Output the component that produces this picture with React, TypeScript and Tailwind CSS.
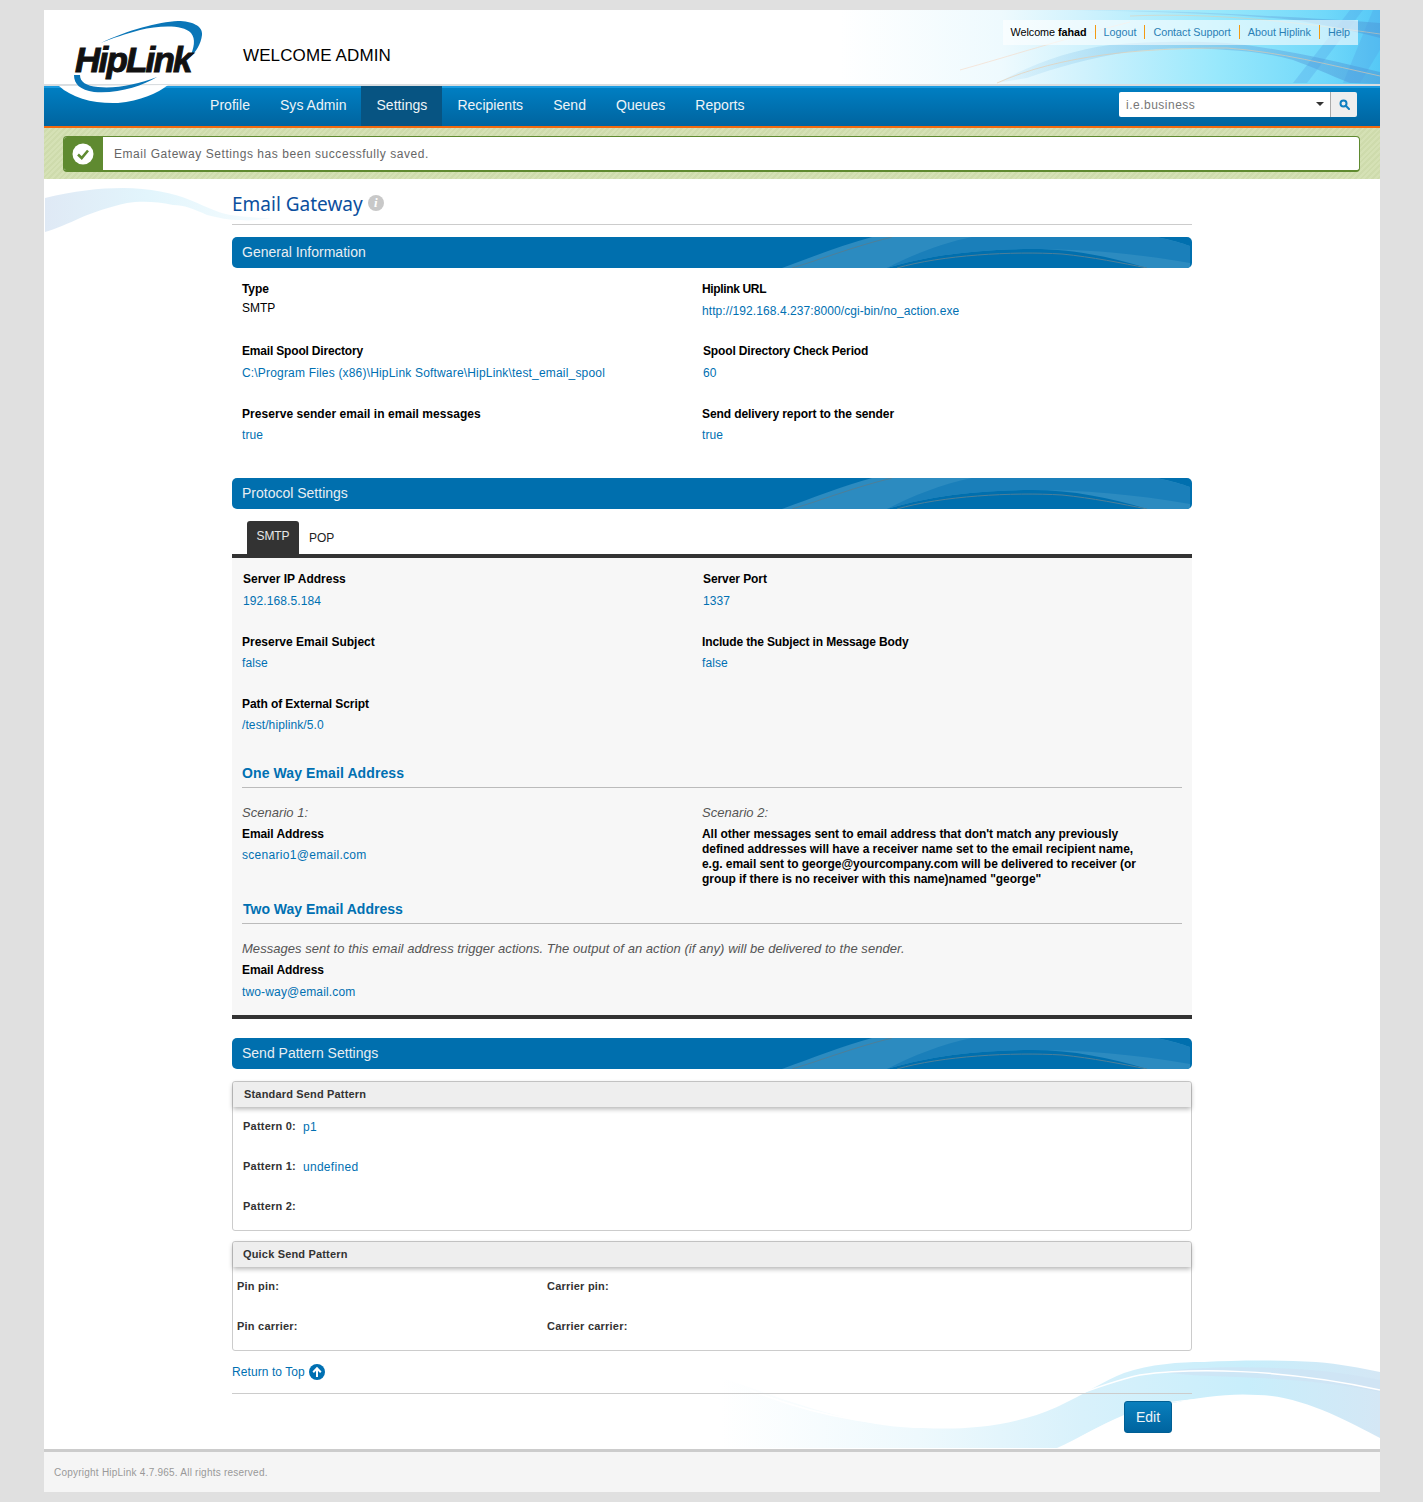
const navItems = ["Profile", "Sys Admin", "Settings", "Recipients", "Send", "Queues", "Reports"];
const topLinks = ["Logout", "Contact Support", "About Hiplink", "Help"];

function Logo() {
  return (
    <div className="absolute left-[14px] top-[8px] z-10 h-[100px] w-[150px]">
      <svg className="absolute left-0 top-0" width="150" height="100" viewBox="0 0 150 100">
        <path d="M1 68 C14 80 36 86 60 85 C82 83 100 75 110 67 Z" fill="#ffffff" />
        <path d="M43 25 C70 12 100 4 120 3 C134 3 145 8 144 17 C143 26 138 34 132 39 C136 30 138 21 133 15 C124 6 100 8 82 12 C68 16 54 20 43 25 Z" fill="#0a76b8" />
        <path d="M16 57 C16 66 22 72 36 74 C60 76 84 68 99 59 C80 66 58 71 40 69 C28 68 22 64 22 57 Z" fill="#0a76b8" />
      </svg>
      <span className="absolute left-[17px] top-[20px] text-[35px] font-bold italic leading-[44px] tracking-[-1.8px] text-[#111] [-webkit-text-stroke:1px_#111]">
        HipLink
      </span>
    </div>
  );
}

function HeaderWave() {
  return (
    <svg className="absolute right-0 top-0" width="540" height="74" viewBox="0 0 540 74">
      <defs>
        <linearGradient id="headerBase" x1="0" y1="0" x2="1" y2="0">
          <stop offset="0" stopColor="#ffffff" />
          <stop offset="0.3" stopColor="#eefafe" />
          <stop offset="0.45" stopColor="#d0f2fd" />
          <stop offset="0.7" stopColor="#98e8fc" />
          <stop offset="0.9" stopColor="#70d8fa" />
          <stop offset="1" stopColor="#55c8f6" />
        </linearGradient>
        <linearGradient id="bandFade" x1="0" y1="0" x2="1" y2="0">
          <stop offset="0" stopColor="#9fd4f0" stopOpacity="0.15" />
          <stop offset="0.35" stopColor="#8cc8ec" stopOpacity="0.5" />
          <stop offset="1" stopColor="#4ea6e0" stopOpacity="0.75" />
        </linearGradient>
      </defs>
      <rect width="540" height="74" fill="url(#headerBase)" />
      <path d="M157 73 C190 55 230 40 270 35 C310 31 350 31 387 33 C440 38 490 50 540 62 L540 74 L510 73 C490 65 470 56 453 50 C430 44 410 41 387 40 C350 37 320 38 287 42 C250 48 215 58 187 68 Z" fill="url(#bandFade)" />
      <path d="M230 0 C280 0 330 1 370 3 C430 6 490 9 540 13 L540 28 C510 20 480 14 453 10 C400 4 320 2 230 0 Z" fill="url(#bandFade)" />
      <path d="M510 0 L523 0 L467 73 L453 73 Z" fill="#4f9fe6" opacity="0.3" />
      <path d="M533 0 L540 0 L540 40 L520 73 L503 73 Z" fill="#4f9fe6" opacity="0.3" />
      <path d="M120 60 C170 46 220 30 290 12" stroke="#f7d9c4" strokeWidth="1" fill="none" opacity="0.6" />
      <path d="M157 73 C220 45 300 38 387 38 C440 42 490 55 540 66" stroke="#e9c9a8" strokeWidth="1" fill="none" opacity="0.6" />
      <path d="M290 6 C380 2 470 14 540 24" stroke="#e9c9a8" strokeWidth="1" fill="none" opacity="0.5" />
    </svg>
  );
}

function TopLeftWave() {
  return (
    <svg className="absolute left-0 top-0" width="240" height="60" viewBox="0 0 240 60">
      <defs>
        <linearGradient id="tlWave" x1="0" y1="0" x2="1" y2="0">
          <stop offset="0" stopColor="#dfe9f5" />
          <stop offset="0.45" stopColor="#e2f5fc" />
          <stop offset="1" stopColor="#f6fcfe" />
        </linearGradient>
      </defs>
      <path d="M1 19 C30 12 55 9 79 9 C105 9 130 14 146 21 C165 29 175 34 186 36 C200 38 215 39 229 39 C215 41 205 42 196 41 C185 41 175 39 163 36 C150 30 140 26 129 26 C112 22 95 22 83 24 C65 28 50 33 36 39 C25 44 12 50 1 53 Z" fill="url(#tlWave)" />
    </svg>
  );
}

function BottomWave() {
  return (
    <svg className="absolute bottom-[1px] right-0" width="660" height="88" viewBox="0 0 660 88">
      <defs>
        <linearGradient id="brWave" x1="0" y1="0" x2="1" y2="0">
          <stop offset="0" stopColor="#ffffff" />
          <stop offset="0.3" stopColor="#eef9fd" />
          <stop offset="0.55" stopColor="#d8f1fb" />
          <stop offset="0.8" stopColor="#c8eefb" />
          <stop offset="1" stopColor="#d4e7f5" />
        </linearGradient>
      </defs>
      <path d="M0 17 C70 42 140 68 203 68 C240 70 290 68 337 47 C365 34 385 20 404 13 C430 4 460 2 484 2 C520 0 560 0 596 2 C620 4 640 8 660 12 L660 78 C630 62 580 35 538 35 C510 33 480 37 453 43 C430 50 410 57 404 55 C380 65 355 80 337 88 L0 88 Z" fill="url(#brWave)" />
      <path d="M440 12 C480 6 540 6 590 10 C615 12 640 16 660 20 L660 32 C620 24 580 20 540 18 C500 16 470 16 440 12 Z" fill="#cfe3f4" opacity="0.7" />
      <path d="M30 30 C100 58 170 70 250 66 C310 60 360 28 420 15 C470 8 560 8 660 30" stroke="#ffffff" strokeWidth="1.5" fill="none" />
      <path d="M345 86 C380 66 420 44 470 40 C510 36 550 38 590 54 C620 64 640 72 660 80" stroke="#ffffff" strokeWidth="1" fill="none" />
    </svg>
  );
}

function SectionBar({ title }: { title: string }) {
  return (
    <div className="relative h-[31px] overflow-hidden rounded-[5px] bg-[#006fae]">
      <svg className="absolute left-0 top-0" width="960" height="31" viewBox="0 0 960 31">
        <path d="M550 31 C580 20 610 8 640 0 L925 0 C940 3 950 6 958 9 L958 31 L915 31 C880 20 840 12 800 12 C740 12 690 20 655 31 Z" fill="#2c8bc0" />
        <path d="M655 31 C680 18 710 6 740 0 L925 0 C938 3 950 6 958 9 L958 26 C900 16 850 12 800 12 C740 12 690 20 655 31 Z" fill="#1a7fba" />
        <path d="M560 31 C590 22 620 10 660 0" stroke="#4e7f98" strokeWidth="1" fill="none" />
        <path d="M665 31 C710 18 780 14 830 17 C860 20 890 26 915 31" stroke="#4e7f98" strokeWidth="1" fill="none" />
      </svg>
      <span className="absolute left-[10px] top-0 text-[14px] leading-[30px] text-[#e8eef3]">{title}</span>
    </div>
  );
}

function Field({
  label,
  value,
  offset = "",
  gap = "mt-[7px]",
  track = "tracking-[0.1px]",
  labelTrack = "tracking-[-0.08px]",
}: {
  label: string;
  value?: string;
  offset?: string;
  gap?: string;
  track?: string;
  labelTrack?: string;
}) {
  return (
    <div className={offset}>
      <div className={`${labelTrack} text-[12px] font-bold leading-[14px] text-black`}>{label}</div>
      {value && <div className={`${gap} ${track} text-[12px] leading-[15px] text-[#0070b2]`}>{value}</div>}
    </div>
  );
}

function PatternLabel({ children }: { children: string }) {
  return <span className="text-[11px] font-bold tracking-[0.22px] text-[#333]">{children}</span>;
}

function BoxHeader({ title, pad }: { title: string; pad: string }) {
  return (
    <div className={`h-[25px] rounded-t-[3px] bg-[#eeeeee] ${pad} text-[11px] font-bold leading-[24px] tracking-[0.17px] text-[#333] shadow-[0_2px_5px_rgba(0,0,0,0.3)]`}>
      {title}
    </div>
  );
}

export default function App() {
  return (
    <div className="min-h-[1502px] bg-[#e0e0e0] pb-[10px] pt-[10px] font-['Liberation_Sans',Arial,sans-serif]">
      <div className="relative ml-[44px] w-[1336px] bg-white">
        <Logo />
        <header className="relative h-[76px] border-b-2 border-[#d9dde0] bg-white">
          <HeaderWave />
          <h1 className="absolute left-[199px] top-[35px] text-[17px] leading-[22px] tracking-[0.12px] text-black">WELCOME ADMIN</h1>
          <div className="absolute right-[22px] top-[10px] flex h-[25px] w-[355px] items-center justify-end bg-white/60 pr-[8px] text-[10.8px] tracking-[-0.04px]">
            <span className="text-black">
              Welcome <b>fahad</b>
            </span>
            {topLinks.map((link) => (
              <span key={link} className="mb-[1px] ml-[8px] border-l border-[#f39a12] pl-[8px] leading-[14px] text-[#2a7fb5]">
                {link}
              </span>
            ))}
          </div>
        </header>

        <nav className="relative h-[42px] border-b-2 border-[#f26a0f] bg-gradient-to-b from-[#0080c4] to-[#00649f] shadow-[inset_0_2px_0_#1b9be0]">
          <div className="ml-[151px] flex h-[40px]">
            {navItems.map((item) => (
              <span
                key={item}
                className={`px-[15px] text-[14px] leading-[38px] tracking-[0.04px] text-[#eef4f8] ${item === "Settings" ? "bg-[#075482]" : ""}`}
              >
                {item}
              </span>
            ))}
          </div>
          <div className="absolute right-[23px] top-[6px] flex h-[25px] w-[238px] overflow-hidden rounded-[2px]">
            <div className="flex flex-1 items-center justify-between bg-white pl-[7px] pr-[6px] text-[12px] tracking-[0.5px] text-[#777]">
              <span>i.e.business</span>
              <span className="mb-[2px] h-0 w-0 border-x-[4.5px] border-t-[4.5px] border-x-transparent border-t-[#333]" />
            </div>
            <div className="flex w-[27px] items-center justify-center border-l border-[#aaa] bg-[#eeeeee]">
              <svg width="11" height="11" viewBox="0 0 11 11" fill="none" stroke="#0f7fc0" strokeWidth="2">
                <circle cx="4.5" cy="4.5" r="3" />
                <path d="M6.8 6.8 L10 10" strokeLinecap="round" />
              </svg>
            </div>
          </div>
        </nav>

        <div className="flex h-[51px] items-start bg-[repeating-linear-gradient(135deg,#d5e1b5_0,#d5e1b5_2px,#cedbac_2px,#cedbac_4px)] pl-[19px] pt-[8px]">
          <div className="flex h-[36px] w-[1297px] overflow-hidden rounded-[4px] border border-b-2 border-[#5f8a30] bg-white">
            <div className="flex w-[39px] items-center justify-center bg-[#5f8a30] pr-[2px]">
              <svg width="22" height="22" viewBox="0 0 22 22">
                <circle cx="11" cy="11" r="10.5" fill="#fff" />
                <path d="M6 11.5 L9.7 15 L16 7.5" fill="none" stroke="#5f8a30" strokeWidth="2.6" />
              </svg>
            </div>
            <span className="pl-[11px] text-[12px] leading-[35px] tracking-[0.55px] text-[#666]">
              Email Gateway Settings has been successfully saved.
            </span>
          </div>
        </div>

        <main className="relative h-[1270px]">
          <TopLeftWave />
          <BottomWave />
          <div className="relative ml-[188px] w-[960px]">
            <div className="flex h-[46px] items-center gap-[5px] border-b border-[#ccc] pb-[1px] pt-[6px]">
              <h2 className="font-['Noto_Sans',sans-serif] text-[19px] leading-[36px] text-[#0b4f9e]">Email Gateway</h2>
              <span className="mb-[3px] flex h-[16px] w-[16px] items-center justify-center rounded-full bg-[#c8c8c8] font-['Liberation_Serif',serif] text-[13px] font-bold italic text-white">
                i
              </span>
            </div>

            <div className="mt-[12px]">
              <SectionBar title="General Information" />
            </div>
            <div className="grid h-[210px] grid-cols-[460px_1fr] grid-rows-[62px_63px_auto] pl-[10px] pt-[14px]">
              <div>
                <div className="text-[12px] font-bold leading-[14px] tracking-[-0.08px] text-black">Type</div>
                <div className="mt-[5px] text-[12px] leading-[15px] text-black">SMTP</div>
              </div>
              <Field label="Hiplink URL" value="http://192.168.4.237:8000/cgi-bin/no_action.exe" gap="mt-[8px]" track="tracking-[0.08px]" labelTrack="tracking-[-0.35px]" />
              <Field label="Email Spool Directory" value="C:\Program Files (x86)\HipLink Software\HipLink\test_email_spool" gap="mt-[8px]" track="tracking-[0.18px]" labelTrack="tracking-[-0.18px]" />
              <Field label="Spool Directory Check Period" value="60" offset="pl-[1px]" gap="mt-[8px]" labelTrack="tracking-[-0.15px]" />
              <Field label="Preserve sender email in email messages" value="true" labelTrack="tracking-[0.05px]" />
              <Field label="Send delivery report to the sender" value="true" />
            </div>

            <SectionBar title="Protocol Settings" />
            <div className="flex h-[45px] items-end pl-[15px]">
              <span className="h-[33px] w-[52px] rounded-t-[3px] bg-[#333] pt-[8px] text-center text-[12px] leading-[15px] tracking-[-0.1px] text-[#e8e8e8]">SMTP</span>
              <span className="h-[33px] pl-[10px] pt-[10px] text-[12px] leading-[15px] text-[#222]">POP</span>
            </div>
            <div className="h-[465px] border-y-4 border-[#333] bg-[#f7f7f7] px-[10px]">
              <div className="grid grid-cols-[460px_1fr] grid-rows-[63px_62px_59px] pt-[14px]">
                <Field label="Server IP Address" value="192.168.5.184" offset="pl-[1px]" gap="mt-[8px]" labelTrack="tracking-normal" />
                <Field label="Server Port" value="1337" offset="pl-[1px]" gap="mt-[8px]" />
                <Field label="Preserve Email Subject" value="false" labelTrack="tracking-normal" />
                <Field label="Include the Subject in Message Body" value="false" labelTrack="tracking-[-0.14px]" />
                <Field label="Path of External Script" value="/test/hiplink/5.0" />
              </div>
              <h3 className="mt-[7px] border-b border-[#bbb] pb-[4px] text-[14px] font-bold leading-[20px] tracking-[0.1px] text-[#0070b2]">
                One Way Email Address
              </h3>
              <div className="grid h-[111px] grid-cols-[460px_1fr] pt-[17px]">
                <div>
                  <p className="text-[13px] italic leading-[16px] tracking-[0.04px] text-[#555]">Scenario 1:</p>
                  <Field label="Email Address" value="scenario1@email.com" offset="mt-[6px]" track="tracking-[0.3px]" />
                </div>
                <div>
                  <p className="text-[13px] italic leading-[16px] tracking-[0.04px] text-[#555]">Scenario 2:</p>
                  <p className="mt-[6px] w-[440px] text-[12px] font-bold leading-[15px] tracking-[-0.05px] text-black">
                    All other messages sent to email address that don&apos;t match any previously defined addresses will have a receiver name set to the email recipient name, e.g. email sent to george@yourcompany.com will be delivered to receiver (or group if there is no receiver with this name)named &quot;george&quot;
                  </p>
                </div>
              </div>
              <h3 className="border-b border-[#bbb] pb-[4px] pl-[1px] text-[14px] font-bold leading-[20px] text-[#0070b2]">
                Two Way Email Address
              </h3>
              <p className="mt-[17px] text-[13px] italic leading-[16px] tracking-[0.04px] text-[#555]">
                Messages sent to this email address trigger actions. The output of an action (if any) will be delivered to the sender.
              </p>
              <Field label="Email Address" value="two-way@email.com" offset="mt-[6px]" gap="mt-[8px]" track="tracking-[0.15px]" />
            </div>

            <div className="mt-[19px]">
              <SectionBar title="Send Pattern Settings" />
            </div>

            <div className="mt-[12px] h-[150px] rounded-[3px] border border-[#ccc] bg-white/80">
              <BoxHeader title="Standard Send Pattern" pad="pl-[11px]" />
              <div className="pl-[10px] pt-[12px]">
                <div className="flex h-[40px] items-start gap-[7px] leading-[15px]">
                  <PatternLabel>Pattern 0:</PatternLabel>
                  <span className="pt-[1px] text-[12px] tracking-[0.3px] text-[#0070b2]">p1</span>
                </div>
                <div className="flex h-[40px] items-start gap-[7px] leading-[15px]">
                  <PatternLabel>Pattern 1:</PatternLabel>
                  <span className="pt-[1px] text-[12px] tracking-[0.3px] text-[#0070b2]">undefined</span>
                </div>
                <div className="flex items-start leading-[15px]">
                  <PatternLabel>Pattern 2:</PatternLabel>
                </div>
              </div>
            </div>

            <div className="mt-[10px] h-[110px] rounded-[3px] border border-[#ccc] bg-white/80">
              <BoxHeader title="Quick Send Pattern" pad="pl-[10px]" />
              <div className="grid grid-cols-[310px_1fr] grid-rows-[40px_15px] pl-[4px] pt-[12px] leading-[15px]">
                <PatternLabel>Pin pin:</PatternLabel>
                <PatternLabel>Carrier pin:</PatternLabel>
                <PatternLabel>Pin carrier:</PatternLabel>
                <PatternLabel>Carrier carrier:</PatternLabel>
              </div>
            </div>

            <div className="flex h-[43px] items-center gap-[4px] border-b border-[#ccc] text-[12px] tracking-[0.08px] text-[#0070b2]">
              <span>Return to Top</span>
              <svg width="16" height="16" viewBox="0 0 16 16">
                <circle cx="8" cy="8" r="8" fill="#0070b2" />
                <path d="M8 13 V4.5 M4.2 8.2 L8 4.2 L11.8 8.2" fill="none" stroke="#fff" strokeWidth="2" />
              </svg>
            </div>
            <div className="flex justify-end pr-[20px] pt-[7px]">
              <button className="h-[32px] w-[48px] rounded-[3px] border border-[#005f94] bg-gradient-to-b from-[#0a7fbd] to-[#00649f] text-[14px] text-[#eef4f8]">
                Edit
              </button>
            </div>
          </div>
        </main>

        <footer className="h-[43px] border-t-[3px] border-[#ccc] bg-[#f5f5f5] pl-[10px] pt-[14px] text-[10px] leading-[14px] tracking-[0.23px] text-[#999]">
          Copyright HipLink 4.7.965. All rights reserved.
        </footer>
      </div>
    </div>
  );
}
